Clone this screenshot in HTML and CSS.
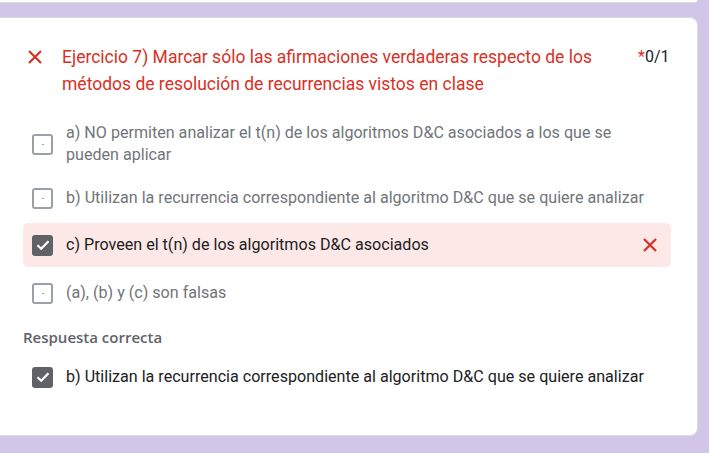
FILE: index.html
```html
<!DOCTYPE html>
<html lang="es">
<head>
<meta charset="utf-8">
<link rel="stylesheet" href="styles.css">
</head>
<body>
<div class="page">
  <div class="card-top"></div>
  <div class="card">
    <div class="title-row">
      <svg class="x-icon" width="16" height="16" viewBox="0 0 16 16"><path d="M2 2 L14 14 M14 2 L2 14" stroke="#d93025" stroke-width="2.2" fill="none"/></svg>
      <div class="title">Ejercicio 7) Marcar sólo las afirmaciones verdaderas respecto de los métodos de resolución de recurrencias vistos en clase</div>
      <div class="score"><span class="ast">*</span>0/1</div>
    </div>
    <div class="options">
      <div class="option">
        <span class="box"><span class="dot"></span></span>
        <span class="label">a) NO permiten analizar el t(n) de los algoritmos D&amp;C asociados a los que se pueden aplicar</span>
      </div>
      <div class="option">
        <span class="box"><span class="dot"></span></span>
        <span class="label">b) Utilizan la recurrencia correspondiente al algoritmo D&amp;C que se quiere analizar</span>
      </div>
      <div class="option wrong">
        <span class="box checked"><svg width="14" height="12" viewBox="0 0 14 12"><path d="M1.5 6.2 L5.2 9.8 L12.5 2.2" stroke="#fff" stroke-width="2.2" fill="none"/></svg></span>
        <span class="label">c) Proveen el t(n) de los algoritmos D&amp;C asociados</span>
        <svg class="x-icon right" width="16" height="16" viewBox="0 0 16 16"><path d="M2 2 L14 14 M14 2 L2 14" stroke="#d93025" stroke-width="2.2" fill="none"/></svg>
      </div>
      <div class="option">
        <span class="box"><span class="dot"></span></span>
        <span class="label">(a), (b) y (c) son falsas</span>
      </div>
    </div>
    <div class="correct-head">Respuesta correcta</div>
    <div class="option correct">
      <span class="box checked"><svg width="14" height="12" viewBox="0 0 14 12"><path d="M1.5 6.2 L5.2 9.8 L12.5 2.2" stroke="#fff" stroke-width="2.2" fill="none"/></svg></span>
      <span class="label dark">b) Utilizan la recurrencia correspondiente al algoritmo D&amp;C que se quiere analizar</span>
    </div>
  </div>
</div>
</body>
</html>
```

FILE: styles.css
```css
* { box-sizing: border-box; }
html, body { margin: 0; padding: 0; }
body {
  background: #d1c6e8;
  font-family: Roboto, "Liberation Sans", sans-serif;
  width: 709px;
  height: 453px;
  overflow: hidden;
}
.page {
  display: flex;
  flex-direction: column;
  width: 708px;
  margin-left: -10px;
}
.card-top {
  height: 3px;
  background: #fff;
  border: 1px solid #dadce0;
  border-top: none;
  border-radius: 0 0 8px 8px;
}
.card {
  margin-top: 14px;
  background: #fff;
  border: 1px solid #dadce0;
  border-radius: 8px;
  height: 419px;
  padding: 26px 0 0 32px;
}
.title-row {
  display: flex;
  align-items: flex-start;
}
.x-icon { flex: none; }
.title-row .x-icon { margin: 5px 0 0 4px; }
.title {
  width: 548px;
  margin-left: 19px;
  color: #d93025;
  font-size: 17.5px;
  line-height: 27px;
}
.score {
  margin-left: 28px;
  margin-top: 1px;
  font-size: 16px;
  line-height: 24px;
  color: #202124;
}
.ast { color: #d93025; }
.options {
  margin-top: 17px;
  display: flex;
  flex-direction: column;
}
.option {
  display: flex;
  align-items: center;
  width: 648px;
  padding: 7px 0 7px 9px;
  min-height: 44px;
}
.options .option + .option { margin-top: 3px; }
.options .option:last-child { margin-top: 4px; }
.box {
  flex: none;
  width: 21px;
  height: 21px;
  border: 2px solid #9aa0a6;
  border-radius: 3px;
  display: flex;
  align-items: center;
  justify-content: center;
}
.dot { width: 2px; height: 1px; background: #9aa0a6; }
.box.checked {
  background: #5f6368;
  border-color: #5f6368;
}
.label {
  margin-left: 13px;
  font-size: 16.1px;
  line-height: 22px;
  color: #70757a;
}
.label.dark, .wrong .label { color: #202124; }
.option:first-child .label { width: 560px; }
.wrong {
  background: #fce8e6;
  border-radius: 5px;
}
.wrong .x-icon.right { margin-left: auto; margin-right: 13px; }
.correct-head {
  margin-top: 12px;
  font-family: "Open Sans", Roboto, sans-serif;
  font-weight: 600;
  font-size: 15px;
  line-height: 20px;
  color: #5f6368;
}
.correct { margin-top: 7px; padding-top: 9px; }
```
